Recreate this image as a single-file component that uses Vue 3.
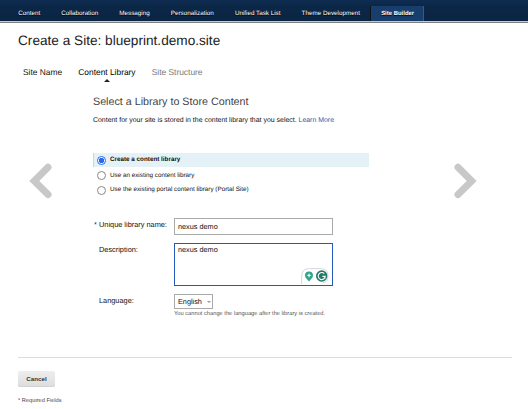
<script setup>
import { ref } from 'vue'

const nav = ['Content', 'Collaboration', 'Messaging', 'Personalization', 'Unified Task List', 'Theme Development', 'Site Builder']
const options = [
  'Create a content library',
  'Use an existing content library',
  'Use the existing portal content library (Portal Site)',
]
const selected = ref(0)
</script>

<template>
  <div class="page">
    <nav class="nav">
      <a v-for="item in nav" :key="item" class="nav-item" :class="{ active: item === 'Site Builder' }">{{ item }}</a>
    </nav>
    <h1 class="title">Create a Site: blueprint.demo.site</h1>
    <div class="steps">
      <span class="step">Site Name</span>
      <span class="step current">Content Library</span>
      <span class="step upcoming">Site Structure</span>
    </div>

    <main class="wizard">
      <svg class="arrow prev" width="24" height="36" viewBox="0 0 24 36"><path d="M19 4.300 5.300 18 19 31.500" /></svg>
      <section class="panel">
        <h2 class="heading">Select a Library to Store Content</h2>
        <p class="intro">Content for your site is stored in the content library that you select. <a class="link">Learn More</a></p>
        <div class="options">
          <div v-for="(option, i) in options" :key="option" class="option" :class="{ chosen: i === selected }" @click="selected = i">
            <span class="radio"></span><span>{{ option }}</span>
          </div>
        </div>
        <div class="form">
          <label class="label name-label"><span class="star">*</span>Unique library name:</label>
          <div class="field name-field">nexus demo</div>
          <label class="label desc-label">Description:</label>
          <div class="field desc-field">
            nexus demo
            <div class="helper">
              <svg width="28" height="16" viewBox="0 0 28 16">
                <path class="helper-edge" d="M.6 16V8.500Q.6.600 8.500.600h11q7.500 0 7.500 7.400 0 6.500-5.500 7" />
                <path class="pin" d="M8 3.400a4 4 0 0 1 4 4c0 2.600-2.400 3.700-4 6-1.600-2.300-4-3.400-4-6a4 4 0 0 1 4-4z" />
                <path class="spark" d="m8 5 .7 1.700 1.700.7-1.700.7L8 9.800l-.7-1.700-1.700-.7 1.700-.7z" />
                <circle class="disc" cx="20.700" cy="8" r="5.700" />
                <path class="mark" d="M23.300 5.700a3.500 3.500 0 1 0 .9 2.700h-2.800M23.900 8.400v2.300" />
              </svg>
            </div>
          </div>
          <label class="label lang-label">Language:</label>
          <div class="language">
            <div class="field select">English<span class="caret"></span></div>
            <p class="hint">You cannot change the language after the library is created.</p>
          </div>
        </div>
      </section>
      <svg class="arrow next" width="24" height="36" viewBox="0 0 24 36"><path d="M5 4.300 18.700 18 5 31.500" /></svg>
    </main>

    <footer class="footer">
      <button class="cancel">Cancel</button>
      <p class="required">* Required Fields</p>
    </footer>
  </div>
</template>

<style>
body { margin: 0; background: #fff; }
</style>

<style scoped>
* { box-sizing: border-box; }
.page {
  width: 528px; height: 409px; overflow: hidden; background: #fff; color: #111;
  font-family: "Liberation Sans", Arial, sans-serif; font-size: 6.300px;
  text-rendering: geometricPrecision; white-space: nowrap;
}
h1, h2, p { margin: 0; font-weight: 400; }
.nav {
  display: flex; height: 23px; padding: 6px 0 0 7.600px;
  background: linear-gradient(#0f2c52, #0b2747 6px, #0b2544 21px, #c3c8ce 21px, #c3c8ce 22px, #808080 22px);
}
.nav-item { height: 15px; padding: 0 10.550px; line-height: 15px; font-size: 6.290px; color: #fff; text-shadow: 0 1px 1px #000; }
.nav-item.active { width: 54px; margin-left: -.3px; padding: 0 0 0 10px; font-size: 5.950px; line-height: 16px; background: #173e6c; border-left: 1px solid #101418; border-right: 1px solid #345a85; font-weight: 700; }
.title { height: 42px; padding: 8px 0 0 18px; font-size: 13.630px; line-height: 20px; color: #222; }
.steps { display: flex; gap: 16.200px; height: 30px; padding-left: 23px; font-size: 8.400px; line-height: 14px; }
.step { display: flex; flex-direction: column; align-items: center; }
.current { color: #000; }
.current::after { content: ""; border: 3px solid transparent; border-top: 0; border-bottom: 3px solid #222; }
.upcoming { color: #777; }
.wizard { display: flex; height: 262px; }
.arrow { flex: none; fill: none; stroke: #c8c8c8; stroke-width: 7; stroke-linecap: round; stroke-linejoin: miter; margin-top: 68px; }
.prev { margin-left: 29px; }
.next { margin-left: 84px; }
.panel { width: 276px; margin-left: 40px; }
.heading { height: 19px; font-size: 10.720px; line-height: 15px; color: #444; }
.intro { height: 39px; font-size: 6.950px; line-height: 13px; }
.link { color: #1f5fa8; }
.options { height: 60px; }
.option { display: flex; align-items: center; height: 15px; padding-left: 4px; gap: 4px; font-size: 6.300px; line-height: 8px; }
.option:last-child { height: 14px; }
.option.chosen { height: 14px; margin-bottom: 1px; background: #e4f1f7; border-left: 1px solid #bfdbe4; padding-left: 3px; font-weight: 700; line-height: 10px; }
.radio { flex: none; width: 9px; height: 9px; border: 1px solid #888; border-radius: 50%; background: #fff; }
.chosen .radio { border-color: #2869e8; background: radial-gradient(#2869e8 2.400px, #fff 3px); }
.form { display: grid; grid-template-columns: 81px 159px; grid-template-rows: 25px 51px 30px; padding-top: 5px; font-size: 7.370px; }
.label { padding-left: 6px; line-height: 12px; }
.desc-label, .lang-label { padding-top: 1px; }
.name-label { padding-left: 1px; padding-top: 1px; }
.star { display: inline-block; width: 5px; }
.field { border: 1px solid #aaa; background: #fff; font-size: 7.300px; }
.name-field { height: 17px; padding-left: 3px; line-height: 16px; }
.desc-field { position: relative; height: 43px; border-color: #2458bd; padding-left: 3px; line-height: 11px; }
.helper { position: absolute; right: 3px; bottom: 1px; height: 16px; }
.helper svg { display: block; }
.helper-edge { fill: #fff; stroke: #c9cbd8; stroke-width: .8; }
.pin { fill: #30a58c; }
.spark { fill: #fff; }
.disc { fill: #237968; }
.mark { fill: none; stroke: #fff; stroke-width: 1.100; }
.select { display: flex; align-items: center; width: 39px; height: 15px; padding-left: 3px; }
.caret { margin-left: 5px; border: 2px solid transparent; border-bottom: 0; border-top-color: #999; }
.hint { padding-top: 1px; font-size: 5.730px; line-height: 9px; color: #555; }
.footer { margin: 0 16px 0 18px; padding-top: 13px; border-top: 1px solid #ddd; }
.cancel {
  display: block; width: 37px; height: 16px; padding: 0 0 1px; border: 0; border-radius: 2px;
  background: linear-gradient(#eee, #ddd); box-shadow: inset 0 -1px #d2d2d2;
  font: 700 6.200px/14px "Liberation Sans", Arial, sans-serif; color: #333;
}
.required { margin-top: 10px; font-size: 5.700px; line-height: 9px; color: #444; }
</style>
